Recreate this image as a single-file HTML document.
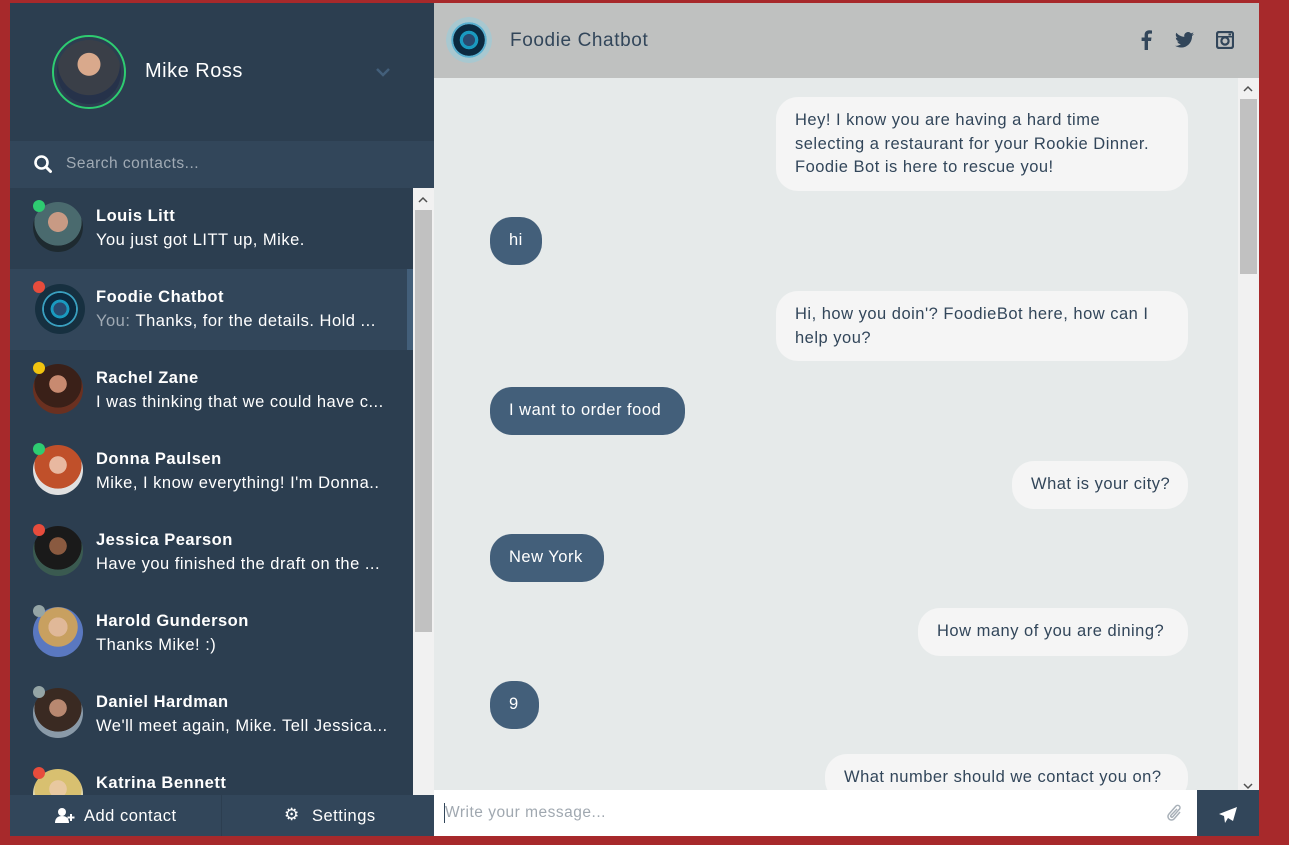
<!DOCTYPE html>
<html><head><meta charset="utf-8"><style>
*{box-sizing:border-box;margin:0;padding:0}
body{width:1289px;height:845px;background:#a7292b;font-family:"Liberation Sans",sans-serif;position:relative;overflow:hidden;letter-spacing:0.5px}
.abs{position:absolute}
#side{left:10px;top:3px;width:424px;height:833px;background:#2c3e50}
#chat{left:434px;top:3px;width:825px;height:833px;background:#e6eaea}
.bub{position:absolute;border-radius:22px;font-size:16.5px;line-height:23.5px;padding:12px 19px;white-space:nowrap}
.s{background:#f5f5f5;color:#32465a}
.r{background:#435f7a;color:#fff}
.item{position:absolute;left:0;width:403px;height:81px}
.av{position:absolute;left:23px;top:14px;width:50px;height:50px;border-radius:50%}
.dot{position:absolute;left:23px;top:12px;width:12px;height:12px;border-radius:50%;border:0}
.nm{position:absolute;left:86px;top:19px;color:#fff;font-weight:bold;font-size:16.5px}
.pv{position:absolute;left:86px;top:43px;color:#fff;font-size:16.5px;white-space:nowrap}
</style></head><body>
<div id="side" class="abs">
  <div class="abs" style="left:42px;top:32px;width:74px;height:74px;border-radius:50%;border:2px solid #2ecc71;padding:3px"><div style="width:100%;height:100%;border-radius:50%;background:radial-gradient(circle at 50% 38%,#d9a98c 0 22%,#3a3f48 23% 60%,#26324a 61%)"></div></div>
  <div class="abs" style="left:135px;top:57px;color:#fff;font-size:20px">Mike Ross</div>
  <svg class="abs" style="left:365px;top:63px" width="16" height="12" viewBox="0 0 16 12"><path d="M2 3l6 6 6-6" stroke="#435f7a" stroke-width="2.5" fill="none"/></svg>
  <div class="abs" style="left:0;top:138px;width:424px;height:47px;background:#32465a"></div>
  <svg class="abs" style="left:24px;top:152px" width="18" height="19" viewBox="0 0 18 19"><circle cx="7.5" cy="7.5" r="6" stroke="#fff" stroke-width="2.6" fill="none"/><path d="M12 12l4.5 4.5" stroke="#fff" stroke-width="3" stroke-linecap="round"/></svg>
  <div class="abs" style="left:56px;top:152px;color:#a0aab4;font-size:15.5px">Search contacts...</div>

  <div class="abs" style="left:0;top:185px;width:424px;height:607px;overflow:hidden">
    <div class="item" style="top:0"><div class="av" style="background:radial-gradient(circle at 50% 40%,#c89a84 0 25%,#4a6a6e 26% 60%,#1e2a30 61%)"></div><div class="dot" style="background:#2ecc71"></div><div class="nm">Louis Litt</div><div class="pv">You just got LITT up, Mike.</div></div>
    <div class="item" style="top:81px;background:#32465a"><div class="abs" style="left:397px;top:0;width:6px;height:81px;background:#435f7a"></div><div class="av" style="left:25px;top:15px;background:radial-gradient(circle,#2a4a70 0 18%,#1a9ac0 19% 26%,#0b2a40 27% 45%,#3aa0c0 46% 50%,#173040 51%)"></div><div class="dot" style="background:#e74c3c"></div><div class="nm">Foodie Chatbot</div><div class="pv"><span style="color:#a0aab4">You:</span>&nbsp;Thanks, for the details. Hold ...</div></div>
    <div class="item" style="top:162px"><div class="av" style="background:radial-gradient(circle at 50% 40%,#c88a70 0 22%,#3a2018 23% 60%,#6a3020 61%)"></div><div class="dot" style="background:#f1c40f"></div><div class="nm">Rachel Zane</div><div class="pv">I was thinking that we could have c...</div></div>
    <div class="item" style="top:243px"><div class="av" style="background:radial-gradient(circle at 50% 40%,#e8b8a0 0 22%,#c0502a 23% 60%,#e0e0e0 61%)"></div><div class="dot" style="background:#2ecc71"></div><div class="nm">Donna Paulsen</div><div class="pv">Mike, I know everything! I'm Donna..</div></div>
    <div class="item" style="top:324px"><div class="av" style="background:radial-gradient(circle at 50% 40%,#8a5a40 0 22%,#1a1a1a 23% 60%,#3a5a50 61%)"></div><div class="dot" style="background:#e74c3c"></div><div class="nm">Jessica Pearson</div><div class="pv">Have you finished the draft on the ...</div></div>
    <div class="item" style="top:405px"><div class="av" style="background:radial-gradient(circle at 50% 40%,#e0b898 0 24%,#c8a060 25% 50%,#5a78c0 51%)"></div><div class="dot" style="background:#95a5a6"></div><div class="nm">Harold Gunderson</div><div class="pv">Thanks Mike! :)</div></div>
    <div class="item" style="top:486px"><div class="av" style="background:radial-gradient(circle at 50% 40%,#b88870 0 22%,#3a2a22 23% 60%,#8a9aa8 61%)"></div><div class="dot" style="background:#95a5a6"></div><div class="nm">Daniel Hardman</div><div class="pv">We'll meet again, Mike. Tell Jessica...</div></div>
    <div class="item" style="top:567px"><div class="av" style="background:radial-gradient(circle at 50% 40%,#e8c8a0 0 22%,#d8c070 23% 60%,#e0d8b0 61%)"></div><div class="dot" style="background:#e74c3c"></div><div class="nm">Katrina Bennett</div></div>
    <div class="abs" style="left:403px;top:0;width:21px;height:607px;background:#f1f1f1"></div>
    <div class="abs" style="left:405px;top:22px;width:17px;height:422px;background:#c1c1c1"></div>
    <svg class="abs" style="left:408px;top:8px" width="10" height="7"><path d="M1 6l4-4 4 4" stroke="#505050" stroke-width="1.5" fill="none"/></svg>
  </div>

  <div class="abs" style="left:0;top:792px;width:424px;height:41px;background:#32465a"></div>
  <div class="abs" style="left:211px;top:792px;width:1px;height:41px;background:#2c3e50"></div>
  <svg class="abs" style="left:45px;top:804px" width="20" height="17" viewBox="0 0 20 17"><circle cx="7" cy="5" r="4" fill="#fff"/><path d="M0 16c0-5 3-7 7-7s7 2 7 7z" fill="#fff"/><path d="M16 7v7M12.5 10.5h7" stroke="#fff" stroke-width="2"/></svg>
  <div class="abs" style="left:74px;top:804px;color:#fff;font-size:16.5px">Add contact</div>
  <div class="abs" style="left:274px;top:802px;color:#fff;font-size:17px">⚙</div>
  <div class="abs" style="left:302px;top:804px;color:#fff;font-size:16.5px">Settings</div>
</div>

<div id="chat" class="abs">
  <div class="abs" style="left:0;top:0;width:825px;height:75px;background:#bfc1c0"></div>
  <div class="abs" style="left:12px;top:14px;width:46px;height:46px;border-radius:50%;background:radial-gradient(circle,#2a4a70 0 18%,#1a9ac0 19% 28%,#0b2a40 29% 48%,#5ab0d0 49% 54%,#a8c8d0 55% 70%,#bfc1c0 71%)"></div>
  <div class="abs" style="left:76px;top:27px;color:#32465a;font-size:19px;letter-spacing:0.6px">Foodie Chatbot</div>
  <svg class="abs" style="left:707px;top:27px" width="11" height="20" viewBox="0 0 11 20"><path d="M7 20v-9h3l.5-3.5H7V5.3c0-1 .3-1.7 1.8-1.7H11V.5A24 24 0 008.2.3C5.5.3 3.6 2 3.6 5v2.5H.6V11h3v9z" fill="#32465a"/></svg>
  <svg class="abs" style="left:741px;top:29px" width="19" height="16" viewBox="0 0 24 20"><path d="M24 2.4a10 10 0 01-2.8.8A5 5 0 0023.3.4a10 10 0 01-3.1 1.2A4.9 4.9 0 0011.8 6 14 14 0 011.7.9a4.9 4.9 0 001.5 6.6A4.9 4.9 0 011 6.9a4.9 4.9 0 004 4.8 5 5 0 01-2.2.1 4.9 4.9 0 004.6 3.4A9.9 9.9 0 010 17.3 14 14 0 007.5 19.5c9.1 0 14-7.5 14-14v-.6A10 10 0 0024 2.4z" fill="#32465a"/></svg>
  <svg class="abs" style="left:782px;top:28px" width="18" height="18" viewBox="0 0 18 18"><rect x="1" y="1" width="16" height="16" rx="2" fill="none" stroke="#32465a" stroke-width="2.2"/><circle cx="9" cy="10" r="3.6" fill="none" stroke="#32465a" stroke-width="2.2"/><rect x="1" y="5" width="16" height="1.5" fill="#32465a"/><rect x="12.5" y="2.5" width="2.5" height="2" fill="#32465a"/></svg>

  <div class="bub s" style="left:342px;top:94px;width:412px;height:94px">Hey! I know you are having a hard time<br>selecting a restaurant for your Rookie Dinner.<br>Foodie Bot is here to rescue you!</div>
  <div class="bub r" style="left:56px;top:214px;width:52px;height:48px">hi</div>
  <div class="bub s" style="left:342px;top:288px;width:412px;height:70px">Hi, how you doin'? FoodieBot here, how can I<br>help you?</div>
  <div class="bub r" style="left:56px;top:384px;width:195px;height:48px">I want to order food</div>
  <div class="bub s" style="left:578px;top:458px;width:176px;height:48px">What is your city?</div>
  <div class="bub r" style="left:56px;top:531px;width:114px;height:48px">New York</div>
  <div class="bub s" style="left:484px;top:605px;width:270px;height:48px">How many of you are dining?</div>
  <div class="bub r" style="left:56px;top:678px;width:49px;height:48px">9</div>
  <div class="bub s" style="left:391px;top:751px;width:363px;height:48px">What number should we contact you on?</div>

  <div class="abs" style="left:804px;top:75px;width:21px;height:712px;background:#f1f1f1"></div>
  <div class="abs" style="left:806px;top:96px;width:17px;height:175px;background:#c1c1c1"></div>
  <svg class="abs" style="left:809px;top:82px" width="10" height="7"><path d="M1 6l4-4 4 4" stroke="#505050" stroke-width="1.5" fill="none"/></svg>
  <svg class="abs" style="left:809px;top:780px" width="10" height="7"><path d="M1 1l4 4 4-4" stroke="#505050" stroke-width="1.5" fill="none"/></svg>

  <div class="abs" style="left:0;top:787px;width:763px;height:46px;background:#fff"></div>
  <div class="abs" style="left:10px;top:800px;width:1px;height:20px;background:#32465a"></div>
  <div class="abs" style="left:11px;top:801px;color:#a0a8b0;font-size:15.5px">Write your message...</div>
  <svg class="abs" style="left:732px;top:800px" width="18" height="20" viewBox="0 0 18 20"><path d="M14 9l-6 7a3.5 3.5 0 01-5-5l7-8a2.3 2.3 0 013.3 3.3l-6.5 7.5a1.2 1.2 0 01-1.7-1.7L11 6" stroke="#a8b0b8" stroke-width="1.5" fill="none"/></svg>
  <div class="abs" style="left:763px;top:787px;width:62px;height:46px;background:#32465a"></div>
  <svg class="abs" style="left:784px;top:803px" width="20" height="18" viewBox="0 0 20 18"><path d="M19 1L1 8l5 2 1 7 3-5 5 3z" fill="#fff"/></svg>
</div>
</body></html>
